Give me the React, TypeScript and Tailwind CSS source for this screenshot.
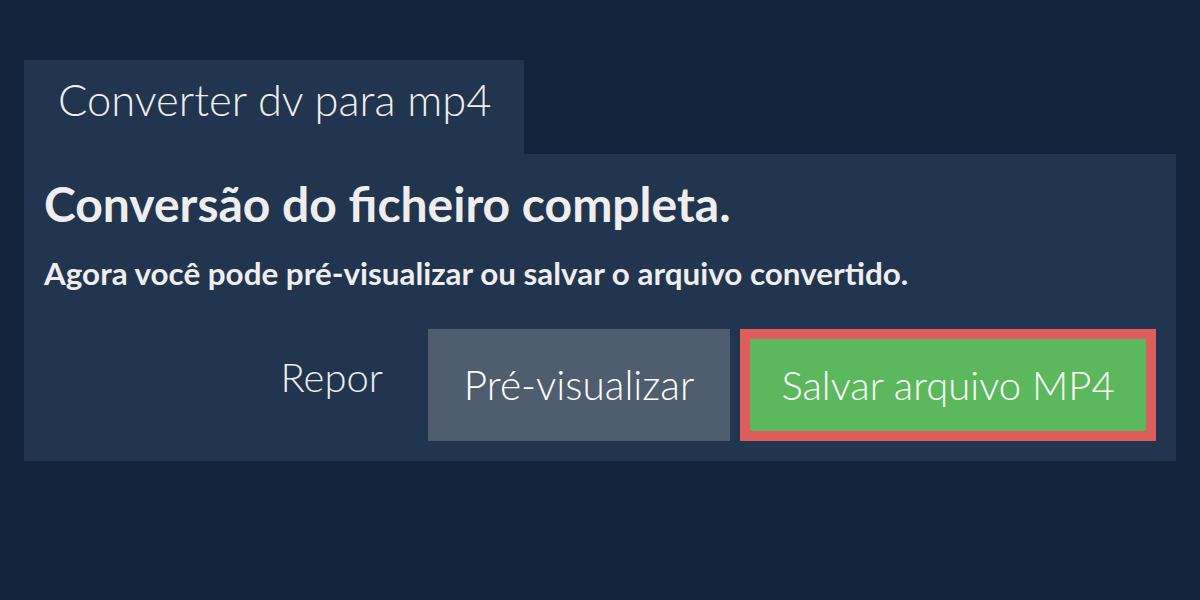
export default function App() {
  return (
    <div
      className="min-h-[600px] w-full bg-[#12243a] px-6 pt-[60px]"
      style={{ fontFamily: "Lato, 'Noto Sans', sans-serif" }}
    >
      <div className="h-[94px] w-[500px] bg-[#21354e] pl-[34px] pt-[18px]">
        <span className="text-[43.5px] font-light leading-none text-[#eeeeee]">
          Converter dv para mp4
        </span>
      </div>
      <div className="bg-[#21354e] px-5 pb-5 pt-[21px]">
        <h1 className="text-[48px] font-bold leading-[1.2] text-[#eeeeee]">
          Conversão do ficheiro completa.
        </h1>
        <p className="mt-[22px] text-[31.4px] font-bold leading-[1.2] text-[#eeeeee]">
          Agora você pode pré-visualizar ou salvar o arquivo convertido.
        </p>
        <div className="mt-[37px] flex items-center justify-end gap-[10px]">
          <button className="h-[112px] pb-4 pr-[35px] text-[40px] font-light text-[#eeeeee]">
            Repor
          </button>
          <button className="flex h-[112px] w-[302px] items-center justify-center bg-[#4f5e6e] text-[40.5px] font-light text-white">
            Pré-visualizar
          </button>
          <button className="flex h-[112px] w-[416px] items-center justify-center border-[10px] border-[#dc5f5b] bg-[#5cb85c] text-[40px] font-light text-white">
            Salvar arquivo MP4
          </button>
        </div>
      </div>
    </div>
  );
}
